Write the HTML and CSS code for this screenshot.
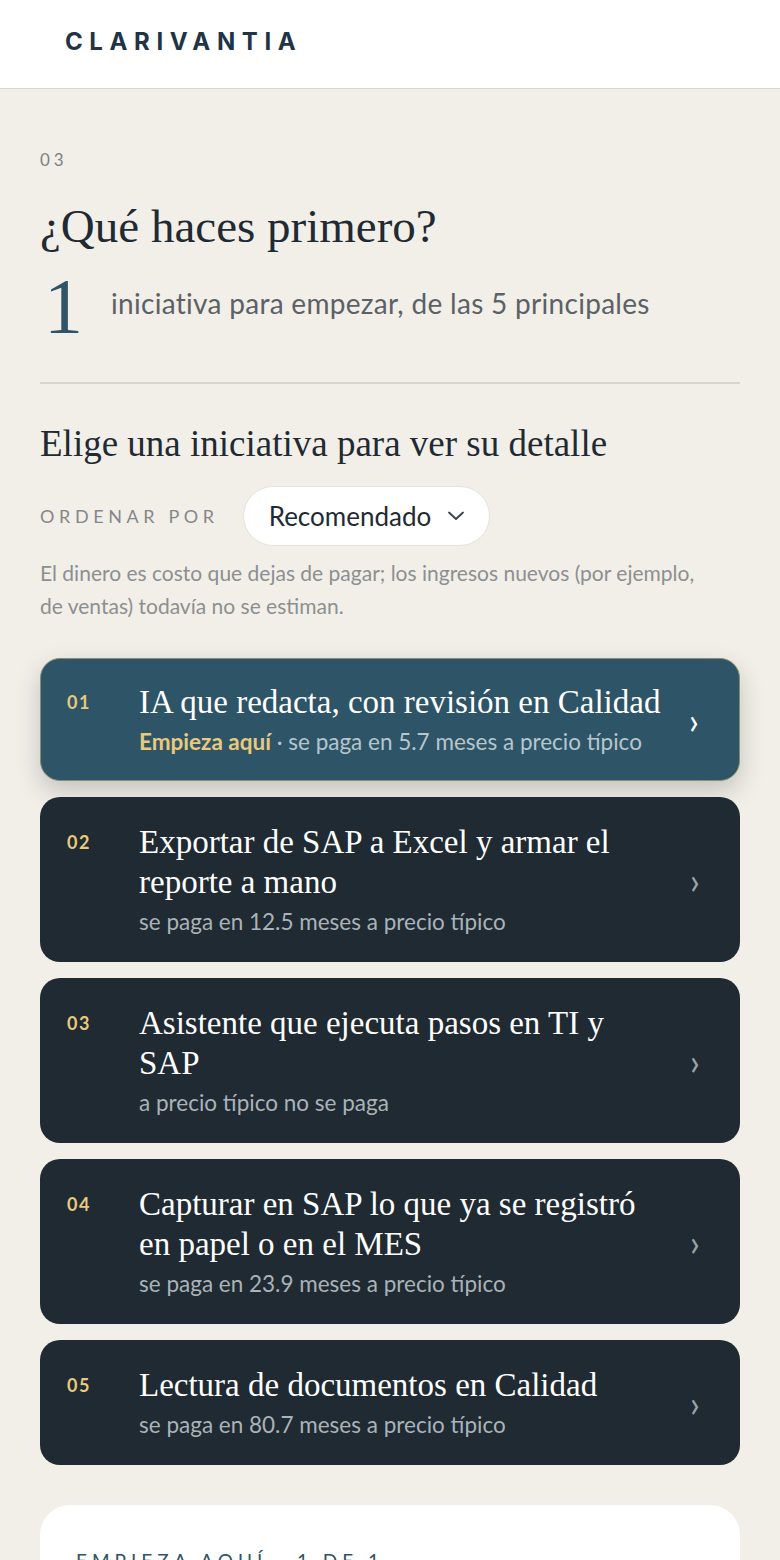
FILE: index.html
```html
<!DOCTYPE html>
<html lang="es">
<head>
<meta charset="utf-8">
<title>Clarivantia</title>
<link rel="stylesheet" href="styles.css">
</head>
<body>
<header class="topbar">
  <div class="logo">CLARIVANTIA</div>
</header>
<main class="content">
  <div class="eyebrow">03</div>
  <h1 class="title">¿Qué haces primero?</h1>
  <div class="stat">
    <span class="stat-num">1</span>
    <span class="stat-text">iniciativa para empezar, de las 5 principales</span>
  </div>
  <hr class="divider">
  <h2 class="subtitle">Elige una iniciativa para ver su detalle</h2>
  <div class="sort">
    <span class="sort-label">ORDENAR POR</span>
    <button class="select">Recomendado
      <svg class="select-chev" width="18" height="12" viewBox="0 0 18 12"><path d="M2 2.5 L9 9 L16 2.5" fill="none" stroke="#3a3f44" stroke-width="1.8" stroke-linecap="round" stroke-linejoin="round"/></svg>
    </button>
  </div>
  <p class="note">El dinero es costo que dejas de pagar; los ingresos nuevos (por ejemplo, de ventas) todavía no se estiman.</p>

  <ul class="list">
    <li class="card card-active">
      <span class="card-num">01</span>
      <div class="card-body">
        <div class="card-title">IA que redacta, con revisión en Calidad</div>
        <div class="card-sub"><strong class="start">Empieza aquí</strong> · se paga en 5.7 meses a precio típico</div>
      </div>
      <span class="card-chev">›</span>
    </li>
    <li class="card">
      <span class="card-num">02</span>
      <div class="card-body">
        <div class="card-title">Exportar de SAP a Excel y armar el reporte a mano</div>
        <div class="card-sub">se paga en 12.5 meses a precio típico</div>
      </div>
      <span class="card-chev">›</span>
    </li>
    <li class="card">
      <span class="card-num">03</span>
      <div class="card-body">
        <div class="card-title">Asistente que ejecuta pasos en TI y SAP</div>
        <div class="card-sub">a precio típico no se paga</div>
      </div>
      <span class="card-chev">›</span>
    </li>
    <li class="card">
      <span class="card-num">04</span>
      <div class="card-body">
        <div class="card-title">Capturar en SAP lo que ya se registró en papel o en el MES</div>
        <div class="card-sub">se paga en 23.9 meses a precio típico</div>
      </div>
      <span class="card-chev">›</span>
    </li>
    <li class="card">
      <span class="card-num">05</span>
      <div class="card-body">
        <div class="card-title">Lectura de documentos en Calidad</div>
        <div class="card-sub">se paga en 80.7 meses a precio típico</div>
      </div>
      <span class="card-chev">›</span>
    </li>
  </ul>

  <section class="detail">
    <div class="detail-eyebrow">EMPIEZA AQUÍ · 1 DE 1</div>
  </section>
</main>
</body>
</html>
```
FILE: styles.css
```css
* { box-sizing: border-box; }
html, body { margin: 0; padding: 0; }
body {
  background: #f2efe8;
  font-family: Lato, "Noto Sans", sans-serif;
  color: #1f2a32;
  width: 780px;
  overflow: hidden;
}
.topbar {
  height: 89px;
  background: #ffffff;
  border-bottom: 1px solid #dad9d5;
  display: flex;
  align-items: center;
  padding-left: 65px;
}
.logo {
  font-family: Inter, "Liberation Sans", sans-serif;
  font-weight: 700;
  font-size: 24px;
  letter-spacing: 6.6px;
  color: #1f3444;
  margin-top: -6px;
}
.content {
  padding: 61px 40px 0 40px;
}
.eyebrow {
  font-size: 17px;
  letter-spacing: 4px;
  color: #7d7f80;
  line-height: 20px;
}
.title {
  font-family: "Liberation Serif", serif;
  font-weight: 400;
  font-size: 47px;
  line-height: 52px;
  margin: 30px 0 0 0;
  color: #1f2a32;
}
.stat {
  display: flex;
  align-items: center;
  gap: 28px;
  margin-top: 14px;
}
.stat-num {
  font-family: "Liberation Serif", serif;
  font-size: 78px;
  line-height: 80px;
  color: #2f5468;
  padding-left: 4px;
}
.stat-text {
  font-size: 28px;
  letter-spacing: 0.3px;
  color: #5b6166;
  margin-top: -6px;
}
.divider {
  border: 0;
  border-top: 2px solid #d8d5cf;
  margin: 36px 0 0 0;
}
.subtitle {
  font-family: "Liberation Serif", serif;
  font-weight: 400;
  font-size: 37px;
  line-height: 44px;
  margin: 38px 0 0 0;
  color: #1f2a32;
}
.sort {
  display: flex;
  align-items: center;
  gap: 24px;
  margin-top: 20px;
}
.sort-label {
  font-size: 18px;
  letter-spacing: 4.6px;
  color: #85878a;
}
.select {
  height: 60px;
  padding: 0 24px 0 25px;
  border-radius: 30px;
  border: 1.5px solid #e6e3dd;
  background: #ffffff;
  font-family: Lato, "Noto Sans", sans-serif;
  font-size: 26px;
  color: #1f2a32;
  display: flex;
  align-items: center;
  gap: 16px;
}
.note {
  font-size: 21px;
  line-height: 33px;
  color: #8c8f91;
  margin: 10px 0 0 0;
  max-width: 665px;
}
.list {
  list-style: none;
  padding: 0;
  margin: 36px 0 0 0;
  display: flex;
  flex-direction: column;
  gap: 16px;
}
.card {
  background: #1f2a32;
  border-radius: 20px;
  display: flex;
  align-items: center;
  padding: 25px 40px 25px 27px;
  color: #ffffff;
}
.card-active {
  background: #2e5468;
  border: 1.5px solid #8b8d72;
  box-shadow: 0 10px 24px rgba(30, 40, 40, 0.22);
  padding: 23px 40px 23px 26px;
}
.card-num {
  align-self: flex-start;
  width: 72px;
  flex: none;
  font-size: 18px;
  font-weight: 700;
  letter-spacing: 1.5px;
  line-height: 40px;
  color: #e9c97b;
}
.card-body {
  flex: 1;
  display: flex;
  flex-direction: column;
  gap: 5px;
}
.card-title {
  font-family: "Liberation Serif", serif;
  font-size: 33px;
  line-height: 40px;
  max-width: 525px;
}
.card-active .card-title { max-width: none; white-space: nowrap; }
.card-sub {
  font-size: 22.5px;
  line-height: 30px;
  color: #aab3b8;
  white-space: nowrap;
}
.card-active .card-sub { color: #b7c6cd; }
.start {
  color: #e9c97b;
  font-weight: 700;
}
.card-chev {
  flex: none;
  font-size: 36px;
  line-height: 36px;
  color: #9aa3a8;
  margin-left: 8px;
}
.card-active .card-chev { color: #ffffff; }
.detail {
  margin-top: 40px;
  background: #ffffff;
  border-radius: 30px;
  padding: 44px 36px 40px 36px;
  min-height: 200px;
}
.detail-eyebrow {
  font-size: 19px;
  letter-spacing: 5px;
  color: #2f5468;
}
```
